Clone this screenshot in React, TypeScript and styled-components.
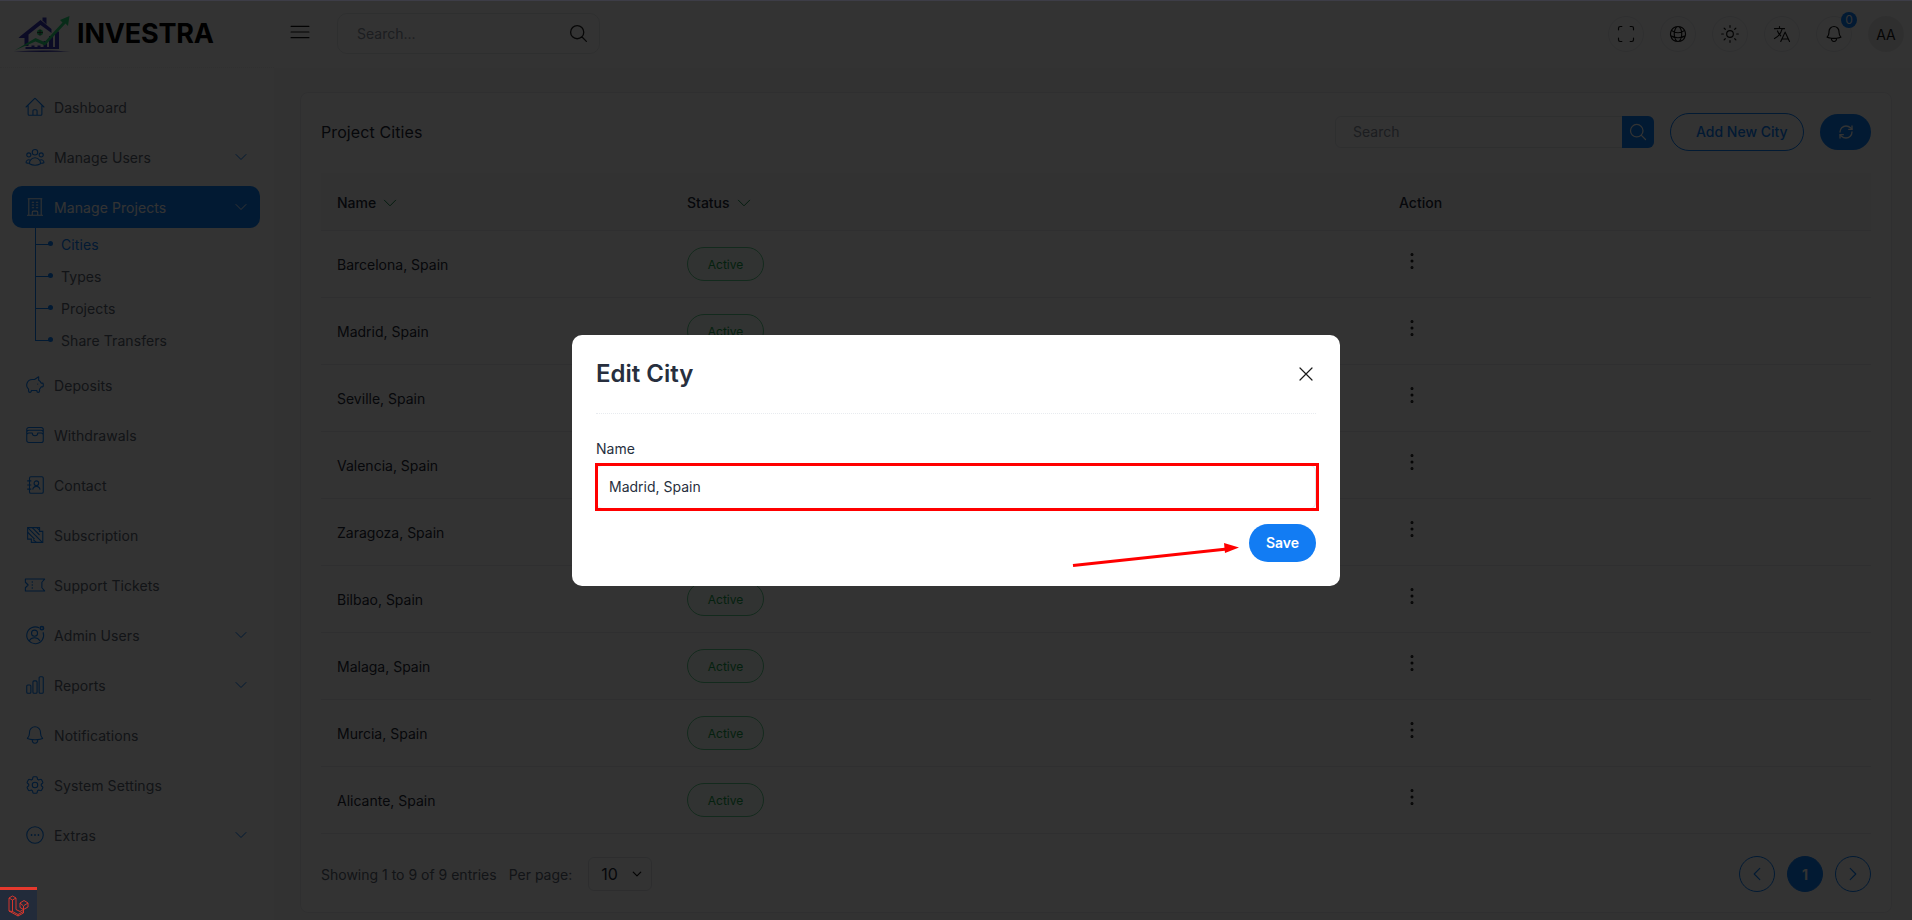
import React from "react";
import styled, { createGlobalStyle } from "styled-components";
import {
  HiOutlineHome,
  HiOutlineUserGroup,
  HiOutlineBuildingOffice,
  HiOutlineWallet,
  HiOutlineChartBar,
  HiOutlineBell,
  HiOutlineCog6Tooth,
  HiOutlineEllipsisHorizontalCircle,
  HiOutlineChevronDown,
  HiOutlineChevronLeft,
  HiOutlineChevronRight,
  HiOutlineMagnifyingGlass,
  HiOutlineLanguage,
  HiOutlineXMark,
  HiOutlineBars3,
  HiOutlineGlobeAlt,
} from "react-icons/hi2";
import { TbPig } from "react-icons/tb";
import { Scan, Sun, RefreshCw, EllipsisVertical } from "lucide-react";

const primary = "#0a80ff";
const textDark = "#1f2937";
const textMuted = "#5b6472";

const GlobalStyle = createGlobalStyle`
  html, body { margin: 0; padding: 0; background: #fff; }
  * { box-sizing: border-box; }
  body { font-family: Inter, "Liberation Sans", sans-serif; color: ${textDark}; }
`;

const Page = styled.div`
  position: relative;
  width: 1912px;
  height: 920px;
  overflow: hidden;
  display: flex;
  background: #fff;
`;

const Sidebar = styled.aside`
  width: 274px;
  flex: none;
  background: #fff;
`;

const Brand = styled.div`
  height: 68px;
  padding-left: 13px;
  display: flex;
  align-items: center;
  gap: 6px;
  border-bottom: 1px dotted #eee;
`;

const BrandName = styled.span`
  font-size: 27px;
  font-weight: 700;
  color: #000;
  letter-spacing: -0.2px;
`;

const Nav = styled.nav`
  padding: 18px 14px 0 12px;
  display: flex;
  flex-direction: column;
  gap: 8px;
`;

const NavItem = styled.div<{ $active?: boolean }>`
  height: 42px;
  padding: 0 11px 0 12px;
  display: flex;
  align-items: center;
  gap: 8px;
  border-radius: 10px;
  font-size: 14px;
  font-weight: 400;
  letter-spacing: 0.08px;
  color: ${(p) => (p.$active ? "#fff" : textMuted)};
  background: ${(p) => (p.$active ? primary : "transparent")};

  & > svg:first-child {
    width: 22px;
    height: 22px;
    flex: none;
    color: ${(p) => (p.$active ? "#fff" : primary)};
    stroke-width: 1.2;
  }

  & > span {
    flex: 1;
  }

  & > svg:last-child:not(:first-child) {
    width: 16px;
    height: 16px;
    color: ${(p) => (p.$active ? "#fff" : primary)};
  }
`;

const SubList = styled.div`
  margin: -8px 0 0 23px;
`;

const SubItem = styled.div<{ $current?: boolean; $last?: boolean }>`
  position: relative;
  height: 32px;
  padding-left: 26px;
  display: flex;
  align-items: center;
  font-size: 14px;
  font-weight: 400;
  letter-spacing: 0.08px;
  color: ${(p) => (p.$current ? primary : textMuted)};

  &::before {
    content: "";
    position: absolute;
    left: 0;
    top: 0;
    width: 1px;
    height: ${(p) => (p.$last ? "50%" : "100%")};
    background: ${primary};
  }

  &::after {
    content: "";
    position: absolute;
    left: 0;
    top: 50%;
    width: 14px;
    height: 1px;
    background: ${primary};
  }
`;

const SubDot = styled.i`
  position: absolute;
  left: 13px;
  top: 13px;
  width: 5px;
  height: 5px;
  border-radius: 50%;
  background: ${primary};
`;

const Main = styled.main`
  flex: 1;
  min-width: 0;
  display: flex;
  flex-direction: column;
  background: #fafafa;
`;

const TopBar = styled.header`
  height: 68px;
  flex: none;
  padding: 0 8px 0 13px;
  display: flex;
  align-items: center;
  background: #fff;
`;

const MenuToggle = styled.div`
  width: 26px;
  height: 26px;
  margin-top: -5px;
  color: #111;

  svg {
    width: 26px;
    height: 26px;
    stroke-width: 1.1;
  }
`;

const TopSearch = styled.div`
  width: 263px;
  height: 41px;
  margin: -1px 0 0 24px;
  padding: 0 10px 0 19px;
  display: flex;
  align-items: center;
  justify-content: space-between;
  border: 1px solid #e6e8ec;
  border-radius: 10px;
  font-size: 14px;
  color: #8a92a0;

  svg {
    width: 21px;
    height: 21px;
    color: #222;
  }
`;

const TopActions = styled.div`
  margin-left: auto;
  display: flex;
  gap: 16px;
`;

const RoundButton = styled.div`
  position: relative;
  width: 36px;
  height: 36px;
  display: flex;
  align-items: center;
  justify-content: center;
  border: 1px solid #e8eaee;
  border-radius: 50%;
  color: #111;

  svg {
    width: 20px;
    height: 20px;
    stroke-width: 1.4;
  }
`;

const Avatar = styled(RoundButton)`
  background: #ececec;
  border: 0;
  font-size: 14px;
  color: #1a1a1a;
`;

const Badge = styled.span`
  position: absolute;
  top: -5px;
  right: -6px;
  width: 16px;
  height: 16px;
  border-radius: 50%;
  background: ${primary};
  color: #fff;
  font-size: 12px;
  line-height: 16px;
  text-align: center;
`;

const Card = styled.section`
  width: 1592px;
  height: 821px;
  margin: 24px 0 0 26px;
  padding: 0 20px;
  background: #fff;
  border: 1px solid #ececf0;
  border-radius: 8px;
`;

const CardHead = styled.div`
  height: 80px;
  padding-bottom: 3px;
  display: flex;
  align-items: center;
`;

const CardTitle = styled.h2`
  margin: 0;
  font-size: 16px;
  font-weight: 400;
  letter-spacing: 0.1px;
  color: ${textDark};
`;

const Tools = styled.div`
  margin-left: auto;
  display: flex;
  align-items: center;
`;

const TableSearch = styled.div`
  width: 319px;
  height: 32px;
  display: flex;
  align-items: center;
  justify-content: space-between;
  padding-left: 17px;
  border: 1px solid #e6e8ec;
  border-radius: 6px;
  font-size: 14px;
  color: #8a92a0;
`;

const TableSearchButton = styled.div`
  width: 32px;
  height: 32px;
  margin-right: -1px;
  display: flex;
  align-items: center;
  justify-content: center;
  background: ${primary};
  border-radius: 0 6px 6px 0;
  color: #fff;

  svg {
    width: 20px;
    height: 20px;
  }
`;

const OutlineButton = styled.div`
  width: 134px;
  height: 38px;
  margin-left: 16px;
  padding-left: 25px;
  display: flex;
  align-items: center;
  border: 1px solid ${primary};
  border-radius: 19px;
  color: ${primary};
  font-size: 14px;
  font-weight: 500;
`;

const RefreshButton = styled.div`
  width: 51px;
  height: 36px;
  margin-left: 16px;
  display: flex;
  align-items: center;
  justify-content: center;
  background: ${primary};
  border-radius: 18px;
  color: #fff;

  svg {
    width: 16px;
    height: 16px;
  }
`;

const Row = styled.div<{ $head?: boolean }>`
  height: ${(p) => (p.$head ? 58 : 67)}px;
  padding-top: ${(p) => (p.$head ? 2 : 0)}px;
  display: grid;
  grid-template-columns: 350px 712px 1fr;
  align-items: center;
  border-bottom: 1px solid #ececf0;
  background: ${(p) => (p.$head ? "#f9fafb" : "#fff")};
  font-size: 14px;
  color: ${textDark};
`;

const Cell = styled.div<{ $head?: boolean }>`
  padding-left: 16px;
  display: flex;
  align-items: center;
  gap: 5px;
  font-weight: ${(p) => (p.$head ? 500 : 400)};
  color: ${textDark};

  & > svg.sort {
    width: 18px;
    height: 18px;
    stroke-width: 1.3;
    color: #0d8a42;
  }
`;

const Pill = styled.span`
  width: 77px;
  height: 34px;
  display: flex;
  align-items: center;
  justify-content: center;
  border: 1px solid #62cf8f;
  border-radius: 17px;
  background: #f3fdf7;
  color: #16a34a;
  font-size: 12px;
  font-weight: 400;
`;

const Kebab = styled(EllipsisVertical)`
  width: 22px;
  height: 22px;
  margin: -6px 0 0 2px;
  stroke-width: 1.3;
  color: #111;
`;

const Foot = styled.div`
  height: 78px;
  padding-top: 2px;
  display: flex;
  align-items: center;
  font-size: 14px;
  color: ${textMuted};
`;

const PerPage = styled.span`
  margin: 0 16px 0 12px;
`;

const PerPageSelect = styled.select`
  width: 64px;
  height: 34px;
  padding-left: 12px;
  appearance: none;
  border: 1px solid #dfe2e7;
  border-radius: 6px;
  background: #fff;
  font: 400 16px Inter, "Liberation Sans", sans-serif;
  color: ${textDark};
`;

const SelectWrap = styled.div`
  position: relative;
  height: 34px;

  svg {
    position: absolute;
    right: 9px;
    top: 11px;
    width: 12px;
    height: 12px;
    stroke-width: 2.5;
    color: #111;
    pointer-events: none;
  }
`;

const Pager = styled.div`
  margin-left: auto;
  display: flex;
  gap: 12px;
`;

const PageButton = styled.div<{ $current?: boolean }>`
  width: 36px;
  height: 36px;
  display: flex;
  align-items: center;
  justify-content: center;
  border: 1px solid ${primary};
  border-radius: 50%;
  background: ${(p) => (p.$current ? primary : "#fff")};
  color: ${(p) => (p.$current ? "#fff" : primary)};
  font-size: 14px;
  font-weight: 700;

  svg {
    width: 18px;
    height: 18px;
  }
`;

const Overlay = styled.div`
  position: absolute;
  inset: 0;
  display: flex;
  align-items: center;
  justify-content: center;
  background: rgba(0, 0, 0, 0.8);
  border-top: 1px solid #3d3d47;
`;

const Modal = styled.div`
  position: relative;
  width: 768px;
  height: 251px;
  margin-top: -1px;
  background: #fff;
  border-radius: 10px;
`;

const ModalHead = styled.div`
  height: 79px;
  margin: 0 24px;
  display: flex;
  align-items: center;
  justify-content: space-between;
  border-bottom: 1px dotted #e8ebef;
`;

const ModalTitle = styled.h3`
  margin: 0;
  font-size: 24px;
  font-weight: 600;
  color: #272f3e;
`;

const CloseIcon = styled(HiOutlineXMark)`
  width: 24px;
  height: 24px;
  margin-right: -2px;
  stroke-width: 1.2;
  color: #1a1a1a;
`;

const ModalBody = styled.form`
  padding: 25px 24px 0;
`;

const FieldLabel = styled.label`
  display: block;
  height: 20px;
  margin-bottom: 6px;
  font-size: 14px;
  line-height: 20px;
  color: #272f3e;
`;

const FieldInput = styled.input`
  display: block;
  width: 100%;
  height: 44px;
  padding: 0 12px;
  border: 1px solid #e5e7eb;
  border-radius: 6px;
  font: 400 14px Inter, "Liberation Sans", sans-serif;
  color: #272f3e;
  outline: none;
`;

const ModalFoot = styled.div`
  margin-top: 15px;
  display: flex;
  justify-content: flex-end;
`;

const SaveButton = styled.button`
  width: 67px;
  height: 38px;
  border: 0;
  border-radius: 19px;
  background: #127cf3;
  color: #fff;
  font: 600 14px Inter, "Liberation Sans", sans-serif;
`;

const RedBox = styled.div`
  position: absolute;
  left: 23px;
  top: 128px;
  width: 724px;
  height: 48px;
  border: 3px solid #f00;
  pointer-events: none;
`;

const Arrow = styled.svg`
  position: absolute;
  left: 500px;
  top: 205px;
  width: 170px;
  height: 30px;
`;

const DebugTab = styled.div`
  position: absolute;
  left: 0;
  bottom: 0;
  width: 37px;
  height: 33px;
  display: flex;
  align-items: center;
  justify-content: center;
  background: #222b3a;
  border-top: 3px solid #e6392d;
`;

const Logo = () => (
  <svg width="58" height="37" viewBox="0 0 57 37" fill="none">
    <path d="M7 21 L27 5 L38 14 L38 18 L27 10 L15 19.500 V31 H11 V23 H5 Z" fill="#3b37b8" />
    <path d="M29 5.500 V2.500 H33 V9.500 Z" fill="#3b37b8" />
    <circle cx="26.500" cy="17.500" r="3" fill="#2bdc7c" />
    <path d="M26.500 14.500 V20.500 M23.500 17.500 H29.500" stroke="#333" strokeWidth="0.8" />
    <path d="M12 34 v-2 h6 v-1.500 h3 v1.500 h3 v-1.500 h3 v1.500 h3 v-6 h3.500 v6 h2 v-11 h4 v11 h2 v-15.500 h4 v17.500 z" fill="#3b37b8" />
    <path d="M0 36.500 C20 35 40 35 57 36.500 C38 37 20 37 0 36.500 Z" fill="#3b37b8" />
    <path d="M1 35.500 L22 23 L31 27 L49 7.500 L46.500 5 L56 1 L54.500 11 L52 8.500 L31.500 30.500 L22 26.500 Z" fill="#2bdc7c" />
  </svg>
);

const ContactIcon = () => (
  <svg viewBox="0 0 24 24" fill="none" stroke="currentColor" strokeWidth="1.3">
    <rect x="6" y="3" width="15" height="18" rx="1.500" />
    <path d="M3.500 7.500H8M3.500 12H8M3.500 16.500H8" />
    <circle cx="13.500" cy="10" r="2.500" />
    <path d="M9.500 17c.5-2.500 2-3.500 4-3.500s3.500 1 4 3.500" />
  </svg>
);

const TicketIcon = () => (
  <svg viewBox="0 0 24 24" fill="none" stroke="currentColor" strokeWidth="1.3" strokeLinejoin="round">
    <path d="M1.500 5.500H22.500L19.500 9V15L22.500 18.500H1.500V15L4.500 12L1.500 9Z" />
    <path d="M9 8v1.500M9 11.200v1.600M9 14.500v1.500" />
  </svg>
);

const SubscriptionIcon = () => (
  <svg viewBox="0 0 24 24" fill="none" stroke="currentColor" strokeWidth="1.3">
    <path d="M4 4h13v4h3.500v12H8v-3.500H4z" />
    <path d="M4 9l7.500 7.500M4 4l12.500 12.500M9 4l8 8M14 4l3 3M10 17l3.500 3M17 17l3 3M13 13l7 7" />
  </svg>
);

const AdminIcon = () => (
  <svg viewBox="0 0 24 24" fill="none" stroke="currentColor" strokeWidth="1.3">
    <path d="M16.500 4.200A9.200 9.200 0 1 0 20.800 9" />
    <circle cx="11.500" cy="10" r="3.300" />
    <path d="M5.500 18.500c1.500-2.500 3.500-3.500 6-3.500s4.500 1 6 3.500" />
    <circle cx="19.500" cy="4.500" r="1.800" strokeWidth="1.800" />
  </svg>
);

const LaravelIcon = () => (
  <svg width="21" height="23" viewBox="0 0 21 23" fill="none" stroke="#e6392d" strokeWidth="0.9" strokeLinejoin="round">
    <path d="M1 4 L4.500 2 L8 4 V15.500 L12 17.500 L15.500 15.500 V19 L10 22 L1 17 Z" />
    <path d="M1 4 L4.500 6 L8 4 M4.500 6 V17.500 L10 20.500 V22 M4.500 17.500 L1 17 M10 20.500 L15.500 17.500" />
    <path d="M12 9 L16 6.500 L20 9 V13 L15.500 15.500 V12 L12 9 Z M12 9 V13.500 L15.500 15.500 M16 11.500 L20 9" />
  </svg>
);

const cities = [
  "Barcelona, Spain",
  "Madrid, Spain",
  "Seville, Spain",
  "Valencia, Spain",
  "Zaragoza, Spain",
  "Bilbao, Spain",
  "Malaga, Spain",
  "Murcia, Spain",
  "Alicante, Spain",
];

const subItems = ["Cities", "Types", "Projects", "Share Transfers"];

const bottomNav: { label: string; icon: React.ReactNode; arrow?: boolean }[] = [
  { label: "Deposits", icon: <TbPig /> },
  { label: "Withdrawals", icon: <HiOutlineWallet /> },
  { label: "Contact", icon: <ContactIcon /> },
  { label: "Subscription", icon: <SubscriptionIcon /> },
  { label: "Support Tickets", icon: <TicketIcon /> },
  { label: "Admin Users", icon: <AdminIcon />, arrow: true },
  { label: "Reports", icon: <HiOutlineChartBar />, arrow: true },
  { label: "Notifications", icon: <HiOutlineBell /> },
  { label: "System Settings", icon: <HiOutlineCog6Tooth /> },
  { label: "Extras", icon: <HiOutlineEllipsisHorizontalCircle />, arrow: true },
];

export default function App() {
  return (
    <Page>
      <GlobalStyle />
      <Sidebar>
        <Brand>
          <Logo />
          <BrandName>INVESTRA</BrandName>
        </Brand>
        <Nav>
          <NavItem>
            <HiOutlineHome />
            <span>Dashboard</span>
          </NavItem>
          <NavItem>
            <HiOutlineUserGroup />
            <span>Manage Users</span>
            <HiOutlineChevronDown />
          </NavItem>
          <NavItem $active>
            <HiOutlineBuildingOffice />
            <span>Manage Projects</span>
            <HiOutlineChevronDown />
          </NavItem>
          <SubList>
            {subItems.map((item, i) => (
              <SubItem key={item} $current={i === 0} $last={i === subItems.length - 1}>
                <SubDot />
                {item}
              </SubItem>
            ))}
          </SubList>
          {bottomNav.map((item) => (
            <NavItem key={item.label}>
              {item.icon}
              <span>{item.label}</span>
              {item.arrow && <HiOutlineChevronDown />}
            </NavItem>
          ))}
        </Nav>
      </Sidebar>

      <Main>
        <TopBar>
          <MenuToggle>
            <HiOutlineBars3 />
          </MenuToggle>
          <TopSearch>
            Search...
            <HiOutlineMagnifyingGlass />
          </TopSearch>
          <TopActions>
            <RoundButton>
              <Scan />
            </RoundButton>
            <RoundButton>
              <HiOutlineGlobeAlt />
            </RoundButton>
            <RoundButton>
              <Sun />
            </RoundButton>
            <RoundButton>
              <HiOutlineLanguage />
            </RoundButton>
            <RoundButton>
              <HiOutlineBell />
              <Badge>0</Badge>
            </RoundButton>
            <Avatar>AA</Avatar>
          </TopActions>
        </TopBar>

        <Card>
          <CardHead>
            <CardTitle>Project Cities</CardTitle>
            <Tools>
              <TableSearch>
                Search
                <TableSearchButton>
                  <HiOutlineMagnifyingGlass />
                </TableSearchButton>
              </TableSearch>
              <OutlineButton>Add New City</OutlineButton>
              <RefreshButton>
                <RefreshCw />
              </RefreshButton>
            </Tools>
          </CardHead>

          <Row $head>
            <Cell $head>
              Name <HiOutlineChevronDown className="sort" />
            </Cell>
            <Cell $head>
              Status <HiOutlineChevronDown className="sort" />
            </Cell>
            <Cell $head>Action</Cell>
          </Row>
          {cities.map((city) => (
            <Row key={city}>
              <Cell>{city}</Cell>
              <Cell>
                <Pill>Active</Pill>
              </Cell>
              <Cell>
                <Kebab />
              </Cell>
            </Row>
          ))}

          <Foot>
            Showing 1 to 9 of 9 entries
            <PerPage>Per page:</PerPage>
            <SelectWrap>
              <PerPageSelect defaultValue="10">
                <option>10</option>
              </PerPageSelect>
              <HiOutlineChevronDown />
            </SelectWrap>
            <Pager>
              <PageButton>
                <HiOutlineChevronLeft />
              </PageButton>
              <PageButton $current>1</PageButton>
              <PageButton>
                <HiOutlineChevronRight />
              </PageButton>
            </Pager>
          </Foot>
        </Card>
      </Main>

      <Overlay>
        <Modal>
          <ModalHead>
            <ModalTitle>Edit City</ModalTitle>
            <CloseIcon />
          </ModalHead>
          <ModalBody>
            <FieldLabel>Name</FieldLabel>
            <FieldInput value="Madrid, Spain" readOnly />
            <ModalFoot>
              <SaveButton type="button">Save</SaveButton>
            </ModalFoot>
          </ModalBody>
          <RedBox />
          <Arrow viewBox="0 0 170 30" fill="none">
            <path d="M1 25.500 L155 9" stroke="#f00" strokeWidth="3" />
            <path d="M152 3 L167 7.500 L153 13 Z" fill="#f00" />
          </Arrow>
        </Modal>
      </Overlay>

      <DebugTab>
        <LaravelIcon />
      </DebugTab>
    </Page>
  );
}
